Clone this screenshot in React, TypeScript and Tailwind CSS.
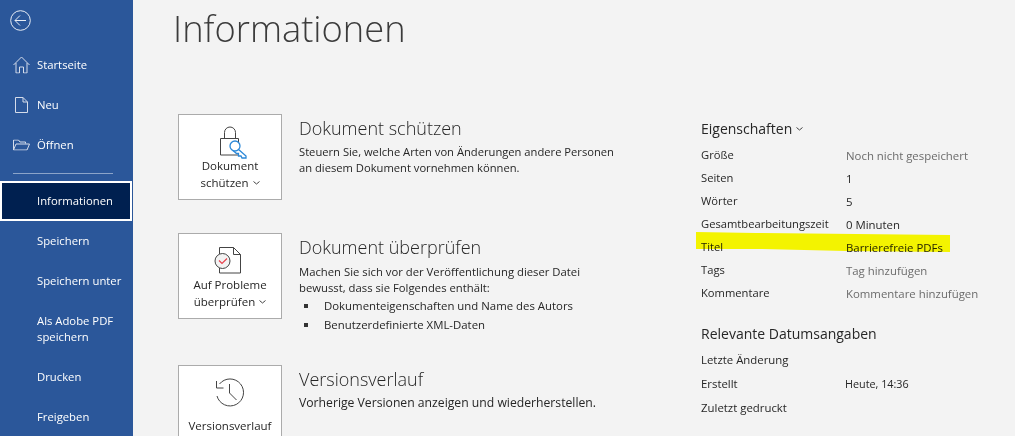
const font = { fontFamily: '"Open Sans", "Noto Sans", sans-serif' };

const navTop = [
  { label: "Startseite", icon: "home" },
  { label: "Neu", icon: "new" },
  { label: "Öffnen", icon: "open" },
];

const navBottom = ["Speichern", "Speichern unter", "Als Adobe PDF speichern", "Drucken", "Freigeben"];

const props = [
  { label: "Größe", value: "Noch nicht gespeichert", muted: true },
  { label: "Seiten", value: "1" },
  { label: "Wörter", value: "5" },
  { label: "Gesamtbearbeitungszeit", value: "0 Minuten" },
  { label: "Titel", value: "Barrierefreie PDFs" },
  { label: "Tags", value: "Tag hinzufügen", muted: true },
  { label: "Kommentare", value: "Kommentare hinzufügen", muted: true },
];

const dates = [
  { label: "Letzte Änderung", value: "" },
  { label: "Erstellt", value: "Heute, 14:36" },
  { label: "Zuletzt gedruckt", value: "" },
];

const NavIcon = ({ name }: { name: string }) => {
  if (name === "home") {
    return (
      <svg width="17" height="17" viewBox="0 0 17 17" fill="none" stroke="#d5dcea" strokeWidth="1">
        <path d="M.5 8.500 8.500.5l8 8M3 6.500v10h3.500v-6h4v6H14v-10" />
      </svg>
    );
  }
  if (name === "new") {
    return (
      <svg className="ml-[2px]" width="13" height="16" viewBox="0 0 13 16" fill="none" stroke="#d5dcea" strokeWidth="1">
        <path d="M.5.500h7.500l4.500 4.500v10.500H.5zM8 .5V5h4.500" />
      </svg>
    );
  }
  return (
    <svg width="17" height="11" viewBox="0 0 17 11" fill="none" stroke="#d5dcea" strokeWidth="1">
      <path d="M.5 10.500V.5h5l1.500 2h5.500v1.500M.5 10.500l2.500-6h13.500l-2.500 6z" />
    </svg>
  );
};

const Chevron = () => (
  <svg className="inline-block ml-[4px] mb-[2px]" width="7" height="4" viewBox="0 0 7 4" fill="none" stroke="#444" strokeWidth="1">
    <path d="M.5.500l3 2.500 3-2.500" />
  </svg>
);

const LockIcon = () => (
  <svg className="overflow-visible" width="28" height="30" viewBox="0 0 28 30" fill="none">
    <path d="M8.500 12.500V6.500a5.500 5.500 0 0 1 11 0v6" stroke="#444" />
    <path d="M4.500 12.500h18v16.500h-18z" fill="#fff" stroke="#444" />
    <path d="M22 23l8 7v2h-4l-1-2h-2.500v-2.500h-2l-3.500-3" fill="#fff" stroke="#2b88d8" strokeWidth="1.300" />
    <circle cx="19" cy="20" r="5" fill="#fff" stroke="#2b88d8" strokeWidth="1.300" />
  </svg>
);

const CheckDocIcon = () => (
  <svg className="overflow-visible" width="27" height="28" viewBox="0 0 27 28" fill="none">
    <path d="M2.500 1.500h14l7 7v18.500h-21z" fill="#fff" stroke="#444" />
    <path d="M16.500 1.500v7h7" stroke="#444" />
    <circle cx="5.500" cy="15" r="7.500" fill="#f3f3f3" stroke="#444" />
    <path d="M2 14.500l3 3 5-5" stroke="#e8414d" strokeWidth="1.200" />
  </svg>
);

const HistoryIcon = () => (
  <svg width="29" height="29" viewBox="0 0 29 29" fill="none" stroke="#444" strokeWidth="1">
    <path d="M3.500 6A13.500 13.500 0 1 1 1 18" />
    <path d="M.5 3v7h7" />
    <path d="M13.500 6v9l7 7" />
  </svg>
);

const ActionCard = ({
  icon,
  lines,
  chevron,
  labelClass,
  children,
}: {
  icon: React.ReactNode;
  lines: string[];
  chevron?: boolean;
  labelClass: string;
  children: React.ReactNode;
}) => (
  <div className="flex">
    <div className="w-[104px] h-[86px] shrink-0 bg-white border border-[#ababab] flex flex-col items-center pt-[11px]">
      <div className="h-[30px] flex items-center">{icon}</div>
      <div className={`${labelClass} text-[11.500px] leading-[17px] text-[#262626] text-center whitespace-nowrap`}>
        {lines.map((line, i) => (
          <div key={line}>
            {line}
            {chevron && i === lines.length - 1 && <Chevron />}
          </div>
        ))}
      </div>
    </div>
    <div className="ml-[17px] w-[322px]">{children}</div>
  </div>
);

export default function App() {
  return (
    <div className="h-[436px] w-[1015px] overflow-hidden flex bg-[#f3f3f3] text-[#262626] relative" style={font}>
      <aside className="w-[133px] shrink-0 bg-[#2b579a] text-white text-[11.300px]">
        <div className="h-[45px] pl-[10px] pt-[10px]">
          <svg width="21" height="21" viewBox="0 0 21 21" fill="none" stroke="#e8edf5" strokeWidth="1">
            <circle cx="10.500" cy="10.500" r="9.800" />
            <path d="M5 10.500h11M10 5.500l-5 5 5 5" />
          </svg>
        </div>
        {navTop.map((item) => (
          <div key={item.label} className="h-[40px] flex items-center relative pl-[37px]">
            <span className="absolute left-[13px] top-1/2 -translate-y-1/2 flex">
              <NavIcon name={item.icon} />
            </span>
            {item.label}
          </div>
        ))}
        <div className="mx-[13px] mt-[8px] mb-[7px] h-px bg-[#8ba4c9] w-[100px]" />
        <div className="h-[40px] w-[132px] flex items-center pl-[37px] bg-[#002050] border-2 border-white">
          <span className="-ml-[2px]">Informationen</span>
        </div>
        {navBottom.map((label) => (
          <div
            key={label}
            className={`flex items-center pl-[37px] leading-[16px] ${label.length > 20 ? "h-[56px] pr-[8px]" : "h-[40px]"}`}
          >
            {label}
          </div>
        ))}
      </aside>

      <main className="flex-1 flex">
        <div className="w-[554px] shrink-0 pl-[45px]">
          <h1 className="text-[36.300px] leading-[50px] font-light text-[#3b3b3b] mt-[3px] -ml-[5px]">Informationen</h1>
          <div className="mt-[61px] flex flex-col gap-[33px]">
            <ActionCard icon={<LockIcon />} lines={["Dokument", "schützen"]} chevron labelClass="mt-[1px]">
              <h2 className="text-[18px] leading-[24px] font-light mt-[2px]">Dokument schützen</h2>
              <p className="text-[11.200px] leading-[16px] mt-[4px]">
                Steuern Sie, welche Arten von Änderungen andere Personen an diesem Dokument vornehmen können.
              </p>
            </ActionCard>
            <ActionCard icon={<CheckDocIcon />} lines={["Auf Probleme", "überprüfen"]} chevron labelClass="mt-[1px]">
              <h2 className="text-[18px] leading-[24px] font-light mt-[2px]">Dokument überprüfen</h2>
              <p className="text-[11.300px] leading-[16px] mt-[5px]">
                Machen Sie sich vor der Veröffentlichung dieser Datei bewusst, dass sie Folgendes enthält:
              </p>
              <ul className="text-[11.400px] leading-[19px] -mb-[2px]">
                <li className="flex items-center">
                  <span className="w-[4px] h-[4px] bg-[#333] ml-[5px] mr-[16px]" />
                  Dokumenteigenschaften und Name des Autors
                </li>
                <li className="flex items-center">
                  <span className="w-[4px] h-[4px] bg-[#333] ml-[5px] mr-[16px]" />
                  Benutzerdefinierte XML-Daten
                </li>
              </ul>
            </ActionCard>
            <ActionCard icon={<HistoryIcon />} lines={["Versionsverlauf"]} labelClass="mt-[10px]">
              <h2 className="text-[18px] leading-[24px] font-light mt-[2px]">Versionsverlauf</h2>
              <p className="text-[12.200px] leading-[16px] mt-[4px]">Vorherige Versionen anzeigen und wiederherstellen.</p>
            </ActionCard>
          </div>
        </div>

        <div className="pl-[14px] pt-[119px] text-[11.400px]">
          <h3 className="text-[14px] leading-[20px] mb-[5px]">
            Eigenschaften
            <Chevron />
          </h3>
          {props.map((row) => (
            <div key={row.label} className="flex h-[23px] items-center">
              <span className="w-[145px] shrink-0 text-[11.200px]">{row.label}</span>
              <span className={row.muted ? "text-[#6b6b6b]" : "text-[#262626]"}>{row.value}</span>
            </div>
          ))}
          <h3 className="text-[14px] leading-[20px] mt-[19px] mb-[4px]">Relevante Datumsangaben</h3>
          {dates.map((row) => (
            <div key={row.label} className="flex h-[24px] items-center">
              <span className="w-[144px] shrink-0">{row.label}</span>
              <span className="text-[10.800px]">{row.value}</span>
            </div>
          ))}
        </div>
      </main>

      <svg className="absolute left-[696px] top-[232px] mix-blend-multiply" width="255" height="21" viewBox="0 0 255 21">
        <path d="M0 0 60 1 254 3 254 20 150 19 66 17 0 17z" fill="#ffff00" />
      </svg>
    </div>
  );
}
